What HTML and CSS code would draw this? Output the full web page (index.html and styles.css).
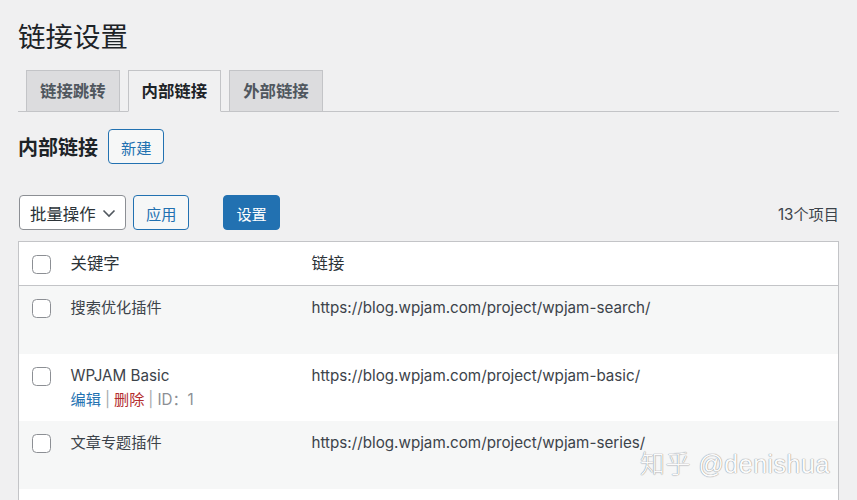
FILE: index.html
```html
<!DOCTYPE html>
<html lang="zh-CN">
<head>
  <meta charset="UTF-8" />
  <meta name="viewport" content="width=device-width, initial-scale=1.0"/>
  <title>链接设置</title>
  <link rel="stylesheet" href="styles.css">
</head>
<body>
  <div class="wrap">
    <h1 class="page-title">链接设置</h1>

    <nav class="nav-tabs">
      <a class="nav-tab">链接跳转</a>
      <a class="nav-tab active">内部链接</a>
      <a class="nav-tab">外部链接</a>
    </nav>

    <div class="section-head">
      <h2>内部链接</h2>
      <button class="button">新建</button>
    </div>

    <div class="tablenav">
      <div class="bulk">
        <div class="select">
          <span>批量操作</span>
          <svg width="14" height="14" viewBox="0 0 14 14"><path d="M1.5 4.5l5.5 5.5 5.5-5.5" fill="none" stroke="#50575e" stroke-width="1.6"/></svg>
        </div>
        <button class="button">应用</button>
      </div>
      <button class="button primary">设置</button>
      <span class="count">13个项目</span>
    </div>

    <table class="list-table">
      <colgroup>
        <col class="col-check">
        <col class="col-keyword">
        <col>
      </colgroup>
      <thead>
        <tr>
          <td class="check"><span class="checkbox"></span></td>
          <th>关键字</th>
          <th>链接</th>
        </tr>
      </thead>
      <tbody>
        <tr class="alt">
          <td class="check"><span class="checkbox"></span></td>
          <td>搜索优化插件<div class="row-actions">&nbsp;</div></td>
          <td>https://blog.wpjam.com/project/wpjam-search/</td>
        </tr>
        <tr>
          <td class="check"><span class="checkbox"></span></td>
          <td>WPJAM Basic
            <div class="row-actions show">
              <a class="edit">编辑</a><span class="sep">|</span><a class="delete">删除</a><span class="sep">|</span><span class="id">ID：1</span>
            </div>
          </td>
          <td>https://blog.wpjam.com/project/wpjam-basic/</td>
        </tr>
        <tr class="alt">
          <td class="check"><span class="checkbox"></span></td>
          <td>文章专题插件<div class="row-actions">&nbsp;</div></td>
          <td>https://blog.wpjam.com/project/wpjam-series/</td>
        </tr>
        <tr>
          <td class="check"><span class="checkbox"></span></td>
          <td>&nbsp;<div class="row-actions">&nbsp;</div></td>
          <td></td>
        </tr>
      </tbody>
    </table>

    <div class="watermark">知乎 @denishua</div>
  </div>
</body>
</html>
```

FILE: styles.css
```css
html, body {
  margin: 0;
  padding: 0;
  overflow: hidden;
}

body {
  background: #f0f0f1;
  color: #3c434a;
  font-family: Inter, "Noto Sans CJK SC", sans-serif;
  font-size: 15px;
}

.wrap {
  position: relative;
  padding: 0 18px;
}

.page-title {
  margin: 0;
  padding-top: 20px;
  font-size: 27.5px;
  line-height: 35px;
  font-weight: 400;
  color: #1d2327;
}

/* tabs */
.nav-tabs {
  display: flex;
  margin-top: 15px;
  border-bottom: 1px solid #c3c4c7;
}

.nav-tab {
  margin-left: 8px;
  margin-bottom: -1px;
  padding: 6px 13px;
  line-height: 28px;
  font-size: 16.4px;
  font-weight: 700;
  color: #50575e;
  background: #dcdcde;
  border: 1px solid #c3c4c7;
}

.nav-tab.active {
  background: #f0f0f1;
  color: #1d2327;
  border-bottom-color: #f0f0f1;
}

/* section heading */
.section-head {
  display: flex;
  align-items: center;
  gap: 10px;
  margin-top: 17px;
}

.section-head h2 {
  margin: 0;
  font-size: 20px;
  font-weight: 700;
  color: #1d2327;
}

.button {
  height: 35px;
  padding: 0 12px;
  font-family: inherit;
  font-size: 15.2px;
  color: #2271b1;
  background: #f6f7f7;
  border: 1px solid #2271b1;
  border-radius: 4px;
}

.button.primary {
  color: #fff;
  background: #2271b1;
  margin-left: 34px;
}

/* tablenav */
.tablenav {
  display: flex;
  align-items: center;
  margin-top: 31px;
}

.bulk {
  display: flex;
  gap: 7px;
  margin-left: 1px;
}

.select {
  display: flex;
  align-items: center;
  gap: 6px;
  box-sizing: border-box;
  width: 107px;
  height: 35px;
  padding: 0 6px 0 10px;
  font-size: 16.4px;
  white-space: nowrap;
  color: #2c3338;
  background: #fff;
  border: 1px solid #8c8f94;
  border-radius: 4px;
}

.select svg {
  flex-shrink: 0;
}

.count {
  margin-left: auto;
  font-size: 15.2px;
}

/* table */
.list-table {
  width: 100%;
  margin-top: 11px;
  table-layout: fixed;
  border-collapse: collapse;
  background: #fff;
  border: 1px solid #c3c4c7;
}

.col-check {
  width: 42px;
}

.col-keyword {
  width: 241px;
}

.list-table th,
.list-table td {
  padding: 10px;
  text-align: left;
  vertical-align: top;
  line-height: 23px;
  font-size: 15.2px;
  font-weight: 400;
  color: #3c434a;
}

.list-table thead th,
.list-table thead td {
  font-size: 16.4px;
  line-height: 23px;
  color: #2c3338;
  border-bottom: 1px solid #c3c4c7;
}

.list-table td.check {
  padding: 13px 0 0 13px;
}

.list-table thead td.check {
  padding-top: 13px;
  padding-bottom: 0;
}

.checkbox {
  display: block;
  width: 19px;
  height: 19px;
  box-sizing: border-box;
  border: 1px solid #8c8f94;
  border-radius: 4.5px;
  background: #fff;
}

.list-table tr.alt {
  background: #f6f7f7;
}

.row-actions {
  padding-top: 2px;
  line-height: 22.5px;
  visibility: hidden;
}

.row-actions.show {
  visibility: visible;
  color: #8c8f94;
}

.row-actions .edit {
  color: #2271b1;
}

.row-actions .delete {
  color: #b32d2e;
}

.row-actions .sep {
  margin: 0 4px;
  color: #a7aaad;
}

.watermark {
  position: absolute;
  left: 640px;
  top: 444px;
  font-family: "Liberation Sans", "Noto Sans CJK SC", sans-serif;
  font-size: 25px;
  font-weight: 300;
  letter-spacing: 0.5px;
  color: #fbfbfb;
  text-shadow: 0 0 1px #8c8f94, 0 0 1px #8c8f94;
}
```
